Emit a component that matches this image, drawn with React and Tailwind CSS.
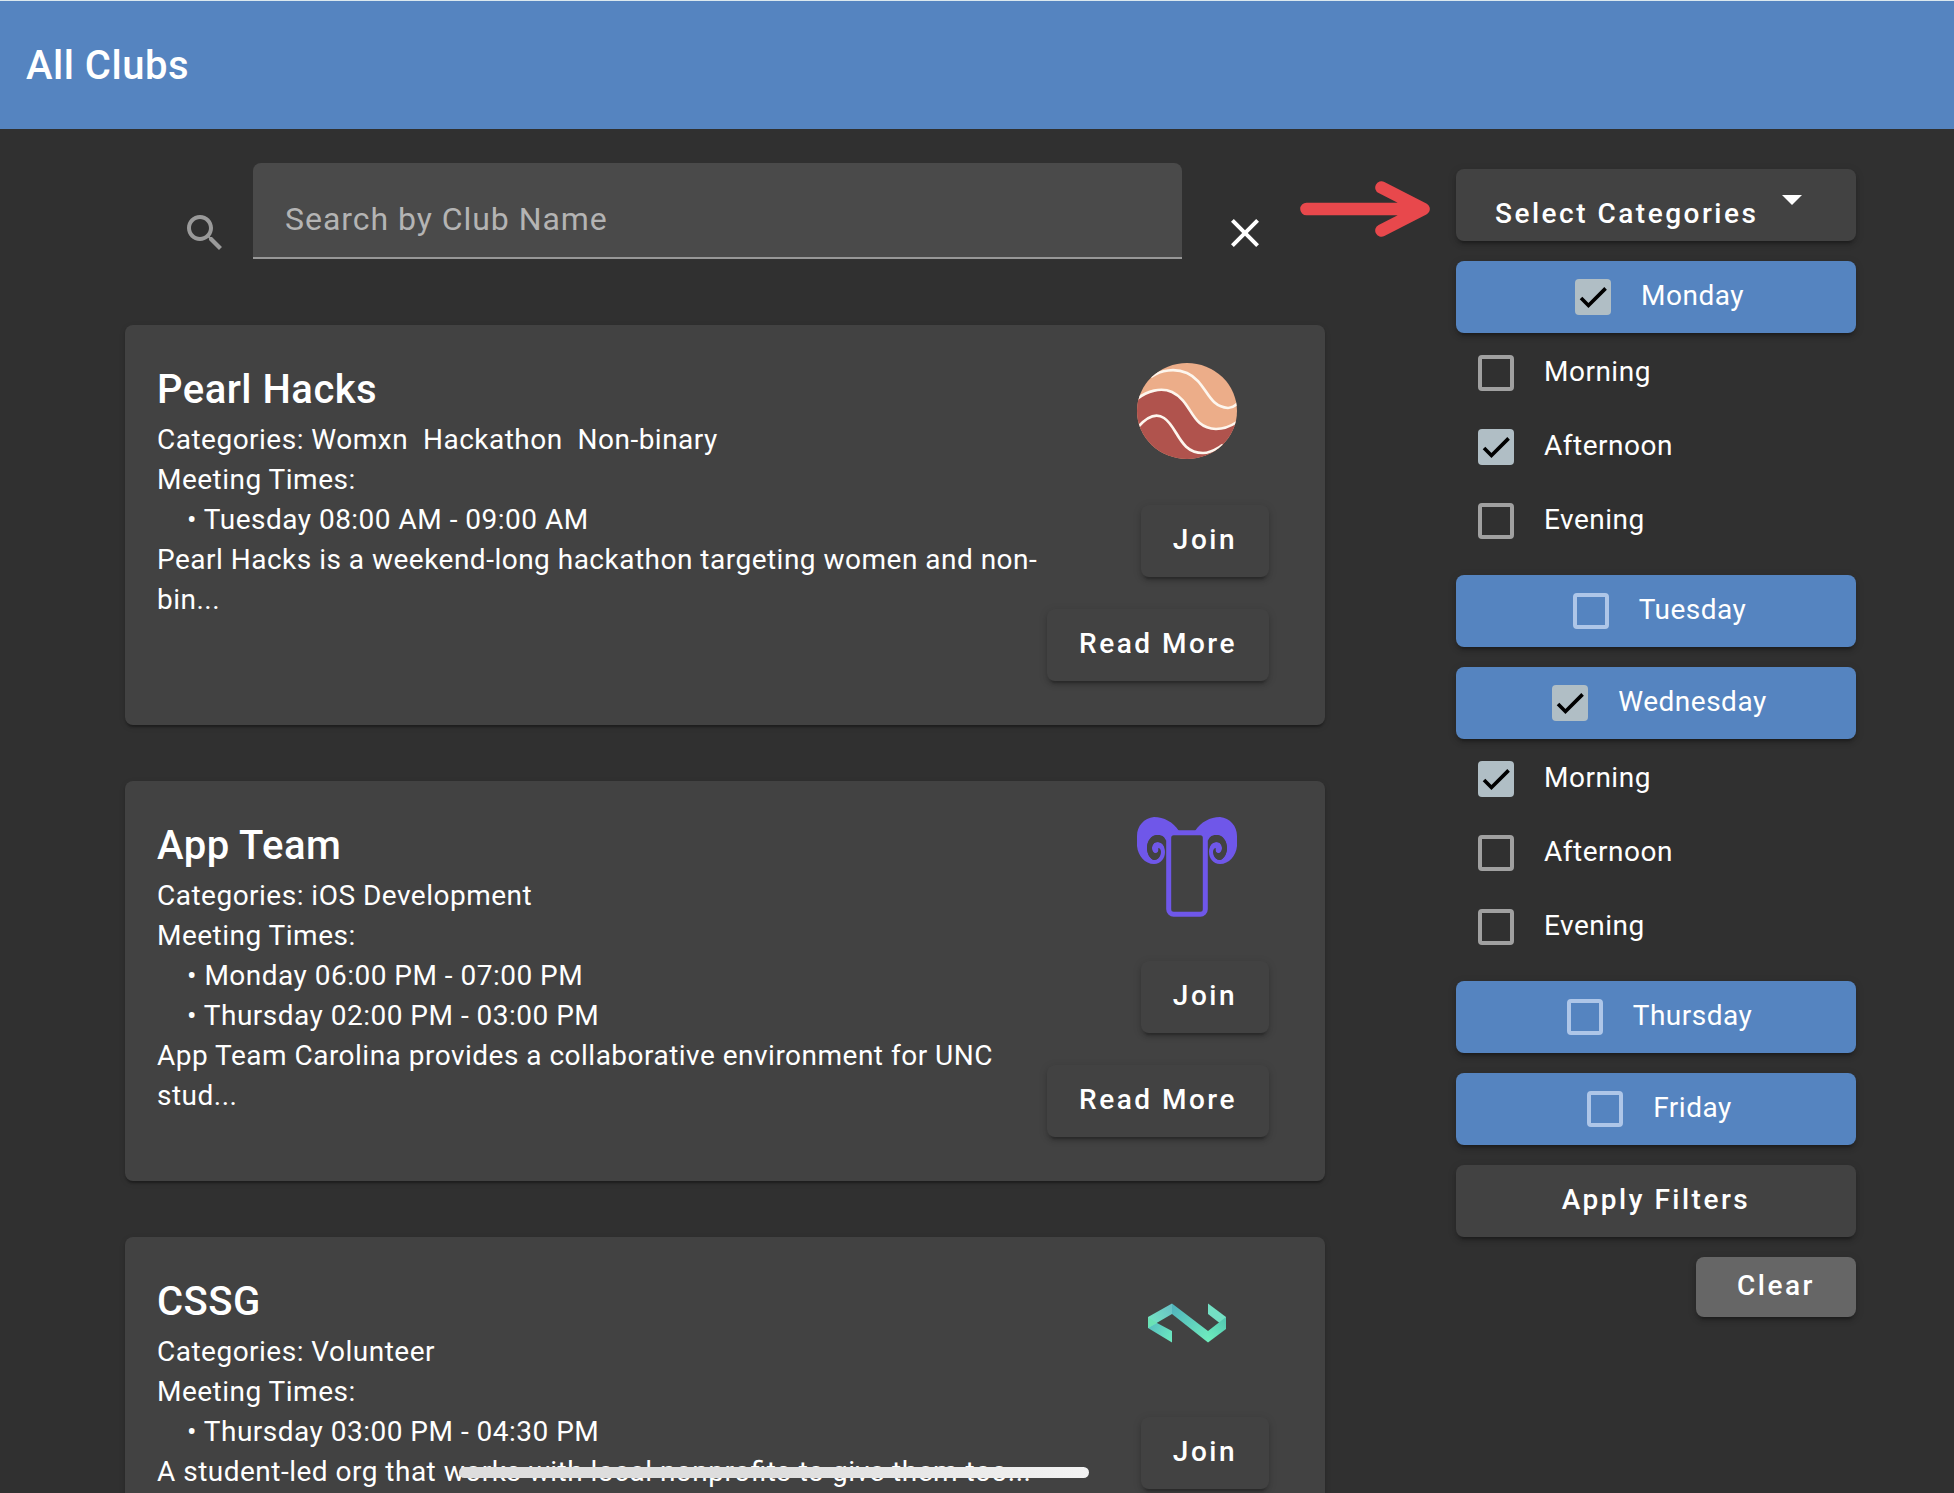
import React from "react";

const clubs = [
  {
    name: "Pearl Hacks",
    categories: ["Womxn", "Hackathon", "Non-binary"],
    times: ["Tuesday 08:00 AM - 09:00 AM"],
    description: "Pearl Hacks is a weekend-long hackathon targeting women and non-bin...",
    Logo: PearlLogo,
  },
  {
    name: "App Team",
    categories: ["iOS Development"],
    times: ["Monday 06:00 PM - 07:00 PM", "Thursday 02:00 PM - 03:00 PM"],
    description: "App Team Carolina provides a collaborative environment for UNC stud...",
    Logo: RamLogo,
  },
  {
    name: "CSSG",
    categories: ["Volunteer"],
    times: ["Thursday 03:00 PM - 04:30 PM"],
    description: "A student-led org that works with local nonprofits to give them too...",
    Logo: RibbonLogo,
  },
];

const days = [
  {
    name: "Monday",
    checked: true,
    slots: [
      { name: "Morning", checked: false },
      { name: "Afternoon", checked: true },
      { name: "Evening", checked: false },
    ],
  },
  { name: "Tuesday", checked: false, slots: [] },
  {
    name: "Wednesday",
    checked: true,
    slots: [
      { name: "Morning", checked: true },
      { name: "Afternoon", checked: false },
      { name: "Evening", checked: false },
    ],
  },
  { name: "Thursday", checked: false, slots: [] },
  { name: "Friday", checked: false, slots: [] },
];

function PearlLogo() {
  return (
    <svg viewBox="0 0 100 100" className="block size-[100px]">
      <clipPath id="pearl">
        <ellipse cx="50" cy="50" rx="50" ry="48" />
      </clipPath>
      <g clipPath="url(#pearl)">
        <rect width="100" height="100" fill="#ecad89" />
        <path
          d="M0 38C10 30 24 26 35 31C56 41 53 67 79 68C87 68 94 65 100 61V100H0Z"
          fill="#b0534d"
        />
        <g fill="none" stroke="#fdf6ee" strokeWidth="2.7">
          <path d="M14 16C24 9 38 7 50 12C70 21 70 46 91 47C95 47 98 45 101 42" />
          <path d="M0 38C10 30 24 26 35 31C56 41 53 67 79 68C87 68 94 65 100 61" />
          <path d="M1 66C9 57 18 51 27 57C41 66 42 92 66 92C74 92 79 88 86 84" />
        </g>
      </g>
    </svg>
  );
}

function RamHorn() {
  return (
    <>
      <path
        d="M42 14C36 5 27 0 17 0C7 1 0 9 0 19V29C1 39 8 47 17 47C24 47 28 41 28 35C28 29 25 25 21 25C17 25 15 28 15 31C15 34 17 37 20 36C22 35 22 32 21 31C23 31 24 33 24 35C24 39 21 43 17 43C13 42 10 36 10 31C10 24 15 18 21 18C25 18 28 20 29 24L34 18Z"
        fill="#6f57e9"
      />
      <path
        d="M29 24C27 20 24 18 20 18C14 18 10 24 10 31C10 37 13 42 17 43C21 43 23 40 23 36C23 34 22 32 21 31C22 33 21 36 19 36C16 37 15 34 15 31C15 28 17 25 20 25C25 25 28 29 28 33Z"
        fill="#424242"
      />
    </>
  );
}

function RamLogo() {
  return (
    <svg viewBox="0 0 100 100" className="block size-[100px]">
      <RamHorn />
      <g transform="matrix(-1 0 0 1 100 0)">
        <RamHorn />
      </g>
      <rect x="31.7" y="15.7" width="36.6" height="81.6" rx="5" fill="#424242" stroke="#6f57e9" strokeWidth="5" />
    </svg>
  );
}

function RibbonLogo() {
  return (
    <svg viewBox="0 0 100 100" className="block size-[100px]">
      <defs>
        <linearGradient id="ribbonBand" x1="35" y1="35" x2="70" y2="70" gradientUnits="userSpaceOnUse">
          <stop stopColor="#51b5bd" />
          <stop offset="1" stopColor="#70edbd" />
        </linearGradient>
        <linearGradient id="ribbonTop" x1="11" y1="50" x2="35" y2="31" gradientUnits="userSpaceOnUse">
          <stop stopColor="#75e6c3" />
          <stop offset="1" stopColor="#68bfc6" />
        </linearGradient>
        <linearGradient id="ribbonTail" x1="12" y1="50" x2="35" y2="66" gradientUnits="userSpaceOnUse">
          <stop stopColor="#56bdbf" />
          <stop offset="1" stopColor="#6ce9c0" />
        </linearGradient>
        <linearGradient id="ribbonEnd" x1="88" y1="48" x2="70" y2="68" gradientUnits="userSpaceOnUse">
          <stop stopColor="#55c9b2" />
          <stop offset="1" stopColor="#70f0be" />
        </linearGradient>
      </defs>
      <path d="M11 44V55L35 69.500V58L20 50Z" fill="url(#ribbonTail)" />
      <path d="M35 30.500L11 44V55L35 41Z" fill="url(#ribbonTop)" />
      <path d="M11 44V55L20 50Z" fill="#6ae2b5" />
      <path d="M71 30.500V41L89 55V44Z" fill="#74e0c4" />
      <path d="M89 44V56L71 69.500V58Z" fill="url(#ribbonEnd)" />
      <path d="M35 30.500V41L71 69.500V58Z" fill="url(#ribbonBand)" />
    </svg>
  );
}

function Checkbox({ checked, onBlue }) {
  if (checked) {
    return (
      <span className="m-[22px] flex size-9 shrink-0 items-center justify-center rounded-[4px] bg-[#b0bec5]">
        <svg viewBox="0 0 24 24" className="size-7" fill="none" stroke="#000" strokeWidth="3.12">
          <path d="M1.73 12.91L8.1 19.28L22.79 4.59" />
        </svg>
      </span>
    );
  }
  return (
    <span
      className={
        onBlue
          ? "m-[22px] size-9 shrink-0 rounded-[4px] border-4 border-[#aec6e8]"
          : "m-[22px] size-9 shrink-0 rounded-[4px] border-4 border-[#a0a0a0]"
      }
    />
  );
}

function CardButton({ children }) {
  return (
    <button className="h-[72px] rounded-lg bg-[#424242] px-8 pb-[2px] text-[28px] font-medium tracking-[2.5px] shadow-[0_6px_2px_-4px_rgba(0,0,0,0.2),0_4px_4px_rgba(0,0,0,0.14),0_2px_10px_rgba(0,0,0,0.12)]">
      {children}
    </button>
  );
}

function ClubCard({ club }) {
  const { name, categories, times, description, Logo } = club;
  return (
    <article className="flex h-[400px] shrink-0 justify-between rounded-lg bg-[#424242] pr-14 pl-8 shadow-[0_4px_2px_-2px_rgba(0,0,0,0.2),0_2px_2px_rgba(0,0,0,0.14),0_2px_6px_rgba(0,0,0,0.12)]">
      <div className="w-[886px] shrink-0 pt-[33px] text-[28px] leading-10 tracking-[0.49px] [font-feature-settings:'liga'_1]">
        <h2 className="h-[62px] text-[40px] leading-[64px] font-medium">{name}</h2>
        <p className="whitespace-pre">Categories: {categories.join("  ")}</p>
        <p>Meeting Times:</p>
        <ul className="pl-[30px]">
          {times.map((time) => (
            <li key={time}>• {time}</li>
          ))}
        </ul>
        <p>{description}</p>
      </div>
      <div className="flex w-[222px] shrink-0 flex-col items-end pt-9">
        <div className="mr-8 mb-11">
          <Logo />
        </div>
        <CardButton>Join</CardButton>
        <div className="h-8" />
        <CardButton>Read More</CardButton>
      </div>
    </article>
  );
}

export default function App() {
  const raised =
    "shadow-[0_6px_2px_-4px_rgba(0,0,0,0.2),0_4px_4px_rgba(0,0,0,0.14),0_2px_10px_rgba(0,0,0,0.12)]";
  return (
    <div className="relative h-[1493px] w-[1954px] overflow-hidden bg-[#303030] font-['Roboto',sans-serif] text-white">
      <header className="flex h-[129px] items-center border-t border-[#dbe8ee] bg-[#5584c0] pt-[2px] pl-[26px]">
        <h1 className="text-[40px] leading-[64px] font-medium tracking-[0.5px]">All Clubs</h1>
      </header>

      <div className="flex">
        <main className="ml-[125px] w-[1200px] shrink-0">
          <div className="flex h-[196px] pt-[34px] pl-14">
            <svg viewBox="0 0 24 24" className="mt-[46px] size-12" fill="#9a9a9a">
              <path d="M15.500 14h-.79l-.28-.27C15.410 12.590 16 11.110 16 9.500 16 5.910 13.090 3 9.500 3S3 5.910 3 9.500 5.910 16 9.500 16c1.610 0 3.090-.59 4.230-1.570l.27.28v.79l5 4.990L20.490 19l-4.990-5zm-6 0C7.010 14 5 11.990 5 9.500S7.010 5 9.500 5 14 7.010 14 9.500 11.990 14 9.500 14z" />
            </svg>
            <div className="ml-6 flex h-24 w-[929px] items-center rounded-t-lg border-b-2 border-[#979797] bg-[#4a4a4a] pt-[17px] pl-8 text-[32px] tracking-[0.96px] text-[#b4b4b4]">
              Search by Club Name
            </div>
            <svg viewBox="0 0 24 24" className="mt-[46px] ml-[39px] size-12" fill="#fff">
              <path d="M19 6.410L17.590 5 12 10.590 6.410 5 5 6.410 10.590 12 5 17.590 6.410 19 12 13.410 17.590 19 19 17.590 13.410 12z" />
            </svg>
          </div>
          <div className="flex flex-col gap-14">
            {clubs.map((club) => (
              <ClubCard key={club.name} club={club} />
            ))}
          </div>
        </main>

        <aside className="mt-10 ml-[131px] flex w-[400px] shrink-0 flex-col gap-5">
          <button
            className={
              "flex h-[72px] items-start rounded-lg bg-[#424242] pl-[39px] text-[28px] font-medium tracking-[2.5px] " + raised
            }
          >
            <span className="mt-[25px] leading-10">Select Categories</span>
            <svg viewBox="0 0 24 24" className="mt-[6px] ml-[10px] size-12" fill="#fff">
              <path d="M7 10l5 5 5-5z" />
            </svg>
          </button>

          {days.map((day) => (
            <div key={day.name}>
              <div className={"flex h-[72px] items-center justify-center rounded-lg bg-[#5584c0] pr-[15px] " + raised}>
                <Checkbox checked={day.checked} onBlue />
                <span className="pb-[2px] pl-2 text-[28px] leading-10 tracking-[0.5px]">{day.name}</span>
              </div>
              {day.slots.map((slot) => (
                <div key={slot.name} className="flex h-[74px] items-start">
                  <Checkbox checked={slot.checked} />
                  <span className="mt-[19px] pl-2 text-[28px] leading-10 tracking-[0.5px]">{slot.name}</span>
                </div>
              ))}
            </div>
          ))}

          <button className={"h-[72px] rounded-lg bg-[#424242] pb-[2px] text-[28px] font-medium tracking-[2.5px] " + raised}>
            Apply Filters
          </button>
          <button
            className={
              "h-[60px] w-40 self-end rounded-lg bg-[#666666] pb-[2px] text-[28px] font-medium tracking-[2.5px] " + raised
            }
          >
            Clear
          </button>
        </aside>
      </div>

      <svg
        viewBox="0 0 130 56"
        className="absolute top-[181px] left-[1300px] h-14 w-[130px]"
        fill="none"
        stroke="#e8484c"
        strokeWidth="12.600"
        strokeLinecap="round"
        strokeLinejoin="round"
      >
        <path d="M6.500 28H120M81.500 6.500L123.500 28L81.500 49.500" />
      </svg>
      <div className="absolute top-[1467px] left-[459px] h-[11px] w-[630px] rounded-full bg-linear-to-r from-[#dddddd] via-[#dddddd] to-[#f3f3f3]" />
    </div>
  );
}
